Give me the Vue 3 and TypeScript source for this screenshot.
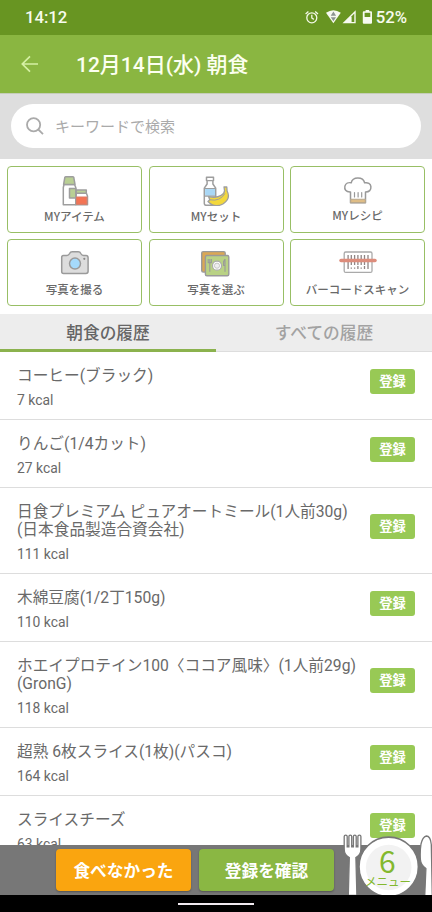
<script setup lang="ts">
import { ref } from 'vue'

interface Food {
  lines: string[]
  kcal: number
}

const foods: Food[] = [
  { lines: ['コーヒー(ブラック)'], kcal: 7 },
  { lines: ['りんご(1/4カット)'], kcal: 27 },
  { lines: ['日食プレミアム ピュアオートミール(1人前30g)', '(日本食品製造合資会社)'], kcal: 111 },
  { lines: ['木綿豆腐(1/2丁150g)'], kcal: 110 },
  { lines: ['ホエイプロテイン100〈ココア風味〉(1人前29g)', '(GronG)'], kcal: 118 },
  { lines: ['超熟 6枚スライス(1枚)(パスコ)'], kcal: 164 },
  { lines: ['スライスチーズ'], kcal: 63 },
]

const tabs = ['朝食の履歴', 'すべての履歴']
const activeTab = ref(0)
</script>

<template>
  <div class="screen">
    <div class="status">
      <span class="clock">14:12</span>
      <svg class="status-icons" width="68" height="20" viewBox="302 8 68 20">
        <g fill="none" stroke="#f4f9e8" stroke-width="1.3">
          <circle cx="310.8" cy="17.8" r="5" />
          <path d="M310.8 14.8V18l2 1.4M304.6 13.9l2.8-2.4M317 13.9l-2.8-2.4" />
        </g>
        <path fill="#f7faf0" d="M325 12.8Q332.3 7.7 339.8 12.8L332.4 23.2Z" />
        <path fill="#8c9490" d="M332.4 11.5l2.7 4.3h-5.4zM329.8 17.3h5.2l-2.6 4z" />
        <path fill="#f7faf0" d="M341.5 23.3L354.7 10.2V23.3Z" />
        <path fill="#689522" d="M350.6 16.2l2.7-2.6v8.3h-2.7z" />
        <path fill="#f7faf0" d="M364.6 10h3.6v1.3h1.8q1 0 1 1v10.4q0 1-1 1h-7.2q-1 0-1-1V12.300q0-1 1-1h1.800z" />
        <path fill="#689522" d="M363.600 12.800h5.700v4.200h-5.700z" />
      </svg>
      <span class="battery">52%</span>
    </div>

    <header class="appbar">
      <svg width="18" height="18" viewBox="0 0 18 18" fill="none" stroke="#d5f0a4" stroke-width="1.7">
        <path d="M9 1.300L1.300 9L9 16.700M1.500 9H17" />
      </svg>
      <h1>12月14日(水) 朝食</h1>
    </header>

    <div class="search">
      <div class="field">
        <svg width="18" height="18" viewBox="0 0 18 18" fill="none" stroke="#aaa" stroke-width="1.8">
          <circle cx="7.600" cy="7.700" r="6.600" />
          <path d="M12.300 12.500L17 17.200" />
        </svg>
        <span>キーワードで検索</span>
      </div>
    </div>

    <div class="shortcuts">
      <button class="tile">
        <svg width="38" height="32" viewBox="55 173.500 38 32" stroke="#9e9e9e" stroke-width="1.500" stroke-linejoin="round">
          <path fill="#fff" d="M63 184h10.500l1.300 3v17.300H62.300V187z" />
          <path fill="#b9cf94" d="M63.800 177.200q0-.9.900-.9h7.200q.9 0 .9.900l1.200 6.800H62.600z" />
          <path fill="#b9cf94" d="M68.500 188h6.300v9.500h-6.300z" />
          <path fill="#fff" d="M75.300 192.500h10l1.200 3v8.800H74.900z" />
          <path fill="#b9cf94" d="M75.300 189.600h10v3.200h-10z" />
          <path fill="#f47454" stroke="#dd7b64" stroke-width="1.200" d="M75.600 196.500h10.200v7.200H75.600z" />
        </svg>
        <span>MYアイテム</span>
      </button>
      <button class="tile">
        <svg width="38" height="32" viewBox="197 173.500 38 32" stroke="#9e9e9e" stroke-width="1.500" stroke-linejoin="round">
          <path fill="#fff" d="M206.500 176.700h7v3.400h-.6v3.400l2.800 4.200v15.200q0 1.900-1.900 1.900h-7.600q-1.900 0-1.900-1.900v-15.200l2.800-4.200v-3.400h-.6z" />
          <path stroke="none" fill="#a9d7f5" d="M205.100 188.300h9.900v7h-9.900z" />
          <path fill="none" stroke-width="1.200" d="M207.300 180.100h5.500M204.500 188h11M204.500 195.700h11" />
          <path fill="#f3d83c" stroke-width="1.300" d="M224 186.500h2.800l.3 4q4 7.500-3.800 12.800-9 4.800-15.300-2.300l1.800-1.800-1.200-3q7.900 1.600 12.600-1.300 3.500-2.200 3.300-5z" />
          <path fill="none" stroke-width="1" d="M210 199.300q10 1.900 15-6.300" />
        </svg>
        <span>MYセット</span>
      </button>
      <button class="tile raised">
        <svg width="38" height="32" viewBox="338.500 174.500 38 32" stroke="#999" stroke-width="1.500" stroke-linejoin="round" stroke-linecap="round">
          <path fill="#fff" d="M350 203.300v-10.800c-4.800.2-6.300-2.700-5.600-5.900.7-2.800 3.600-3.900 6.300-3.300 1.400-6.200 11.800-6.500 13.400 0 3.300-.7 6 .9 6.300 3.800.3 3.500-1.700 5.500-5.400 5.400v10.800z" />
          <path fill="#dfbd86" stroke="#b8a88f" stroke-width="1.100" d="M350.200 199.700h14.600v3.400h-14.600z" />
          <path fill="none" stroke-width="1.200" d="M354 193v4.500M357.600 193v4.500M361.200 193v4.500" />
        </svg>
        <span>MYレシピ</span>
      </button>
      <button class="tile">
        <svg width="38" height="32" viewBox="56 247 38 32" stroke="#9a9a9a" stroke-width="1.500" stroke-linejoin="round">
          <path fill="#ddd" d="M63.500 255.500h3.300q1.800-.2 2.800-2 .7-1.700 2.600-1.700h6q1.900 0 2.600 1.700 1 1.800 2.800 2h2.300q2.200 0 2.200 2.200v13.500q0 2.200-2.200 2.200H63.500q-1.800 0-1.800-2v-13.900q0-2 1.800-2z" />
          <circle cx="75" cy="263.600" r="5.500" fill="#a5dafc" />
          <circle cx="84.300" cy="258.800" r="1.100" fill="#888" stroke="none" />
        </svg>
        <span>写真を撮る</span>
      </button>
      <button class="tile">
        <svg width="38" height="32" viewBox="197 247 38 32" stroke="#9a9a9a" stroke-width="1.400" stroke-linejoin="round">
          <rect x="201.700" y="251.600" width="23.500" height="20.500" rx="1.500" fill="#dba753" />
          <rect x="205.400" y="255.500" width="23.400" height="20.300" rx="1.500" fill="#b9d284" />
          <circle cx="217" cy="265.700" r="4.500" fill="#fff" stroke="#aaa" stroke-width="1.200" />
          <circle cx="217" cy="265.700" r="2.600" fill="#eee" stroke="#bbb" stroke-width=".8" />
          <path fill="none" stroke-width="1.100" d="M209.800 262.500v9.300M208.200 259v3.600h3.200V259M209.800 259v3M225 259v12.800M225 259l-1.400 2.500v4h1.400" />
        </svg>
        <span>写真を選ぶ</span>
      </button>
      <button class="tile">
        <svg width="40" height="32" viewBox="337.500 247 40 32" fill="none" stroke="#aaa" stroke-width="1.300">
          <rect x="343.700" y="252" width="27.800" height="20.400" rx="1.500" fill="#fff" />
          <path stroke="#8f8585" stroke-width="1.300" d="M347.600 255v14M350.800 255v10M354.100 255v10M357.400 255v10M360.700 255v10M364 255v10M367.500 255v14M350.800 267.500v1.300M354.100 267.500v1.300M357.400 266v3M360.700 267.500v1.300M364 266v3" />
          <path stroke="#dd8d7c" stroke-width="3.500" stroke-linecap="round" d="M340.500 260.400h34" />
        </svg>
        <span>バーコードスキャン</span>
      </button>
    </div>

    <nav class="tabs">
      <button
        v-for="(tab, i) in tabs"
        :key="tab"
        class="tab"
        :class="{ active: i === activeTab }"
        @click="activeTab = i"
      >{{ tab }}</button>
    </nav>

    <ul class="list">
      <li v-for="food in foods" :key="food.lines[0]" class="row">
        <div class="info">
          <p v-for="line in food.lines" :key="line" class="name">{{ line }}</p>
          <p class="kcal">{{ food.kcal }} kcal</p>
        </div>
        <button class="add">登録</button>
      </li>
    </ul>

    <footer class="actions">
      <button class="action skip">食べなかった</button>
      <button class="action confirm">登録を確認</button>
      <svg class="plate" width="92" height="65" viewBox="340 830 92 65">
        <g fill="#fff" stroke="#777" stroke-width="1.300">
          <path d="M344.200 836.600q0-1.400 1.500-1.400t1.500 1.400v10.200h1.700v-10.200q0-1.400 1.400-1.400t1.400 1.400v10.200h1.700v-10.200q0-1.400 1.400-1.400t1.400 1.400v10.200h1.700v-10.200q0-1.400 1.500-1.400t1.500 1.400v12.400q0 6-5 8.500l1 38h-8.600l1-38q-5.100-2.500-5.100-8.500z" />
          <path d="M426.300 836q-3.800 1-5.300 8-1.200 8-.6 15.500.4 5.500 5.500 9l-1.200 28h7.600l-1-52q-.8-8.500-5-8.500z" />
          <circle cx="388.700" cy="866.800" r="29.700" stroke-width="1.600" />
        </g>
        <circle cx="388.700" cy="867.500" r="22.800" fill="#f2f2f2" />
        <text class="count" x="387.300" y="873">6</text>
        <text class="unit" x="388" y="886">メニュー</text>
      </svg>
    </footer>
    <div class="home"><i></i></div>
  </div>
</template>

<style>
body {
  margin: 0;
}
</style>

<style scoped>
.screen {
  width: 432px;
  height: 912px;
  display: flex;
  flex-direction: column;
  overflow: hidden;
  background: #fff;
  color: #696969;
  font-family: Roboto, "Noto Sans CJK JP", sans-serif;
}
button {
  border: 0;
  padding: 0;
  margin: 0;
  font-family: inherit;
  color: inherit;
  background: none;
}
.status {
  flex: 0 0 35px;
  display: flex;
  align-items: center;
  padding: 0 25px;
  background: #689522;
  color: #f7fbee;
  font-size: 16.700px;
  font-weight: 500;
  line-height: 34px;
}
.clock {
  padding-top: 1px;
}
.status-icons {
  margin-left: auto;
  overflow: visible;
}
.battery {
  margin-left: 5px;
  padding-top: 1px;
}
.appbar {
  flex: 0 0 59px;
  box-sizing: border-box;
  display: flex;
  align-items: center;
  padding-left: 21px;
  background: #8ab641;
  border-bottom: 1px solid #c5cdb9;
}
.appbar h1 {
  margin: 0 0 0 37px;
  padding-top: 1px;
  color: #fcfff0;
  font-size: 21px;
  font-weight: 500;
  line-height: 30px;
}
.search {
  flex: 0 0 65px;
  box-sizing: border-box;
  padding: 10px 11px 11px;
  background: #dedede;
}
.field {
  display: flex;
  align-items: center;
  gap: 11px;
  height: 44px;
  padding-left: 15px;
  border-radius: 22px;
  background: #fff;
  color: #aaa;
  font-size: 15px;
}
.field span {
  padding-bottom: 2px;
}
.shortcuts {
  flex: 0 0 155px;
  box-sizing: border-box;
  display: grid;
  grid-template-columns: repeat(3, 1fr);
  grid-template-rows: 67px 67px;
  gap: 6.500px;
  padding: 6.500px 7px 0;
}
.tile {
  display: flex;
  flex-direction: column;
  align-items: center;
  justify-content: flex-start;
  box-sizing: border-box;
  padding-top: 7px;
  border: 1.500px solid #98bf65;
  border-radius: 4px;
  background: #fff;
  font-family: "Noto Sans CJK JP", sans-serif;
  font-size: 11.500px;
  font-weight: 500;
  line-height: 16px;
}
.tile span {
  margin-top: 2px;
}
.tile.raised span {
  margin-top: 1px;
}
.tabs {
  flex: 0 0 38px;
  display: flex;
  background: #ededed;
}
.tab {
  flex: 1;
  box-sizing: border-box;
  border-bottom: 1px solid #ddd;
  padding-top: 3px;
  color: #a2a2a2;
  font-size: 16.700px;
  font-weight: 500;
  line-height: 30px;
}
.tab.active {
  border-bottom: 3px solid #8bb24e;
  padding-top: 5px;
  color: #666;
}
.list {
  flex: 1 1 0;
  min-height: 0;
  overflow: hidden;
  margin: 0;
  padding: 0;
  list-style: none;
}
.row {
  display: flex;
  align-items: center;
  justify-content: space-between;
  box-sizing: border-box;
  padding: 15px 17px 10px;
  border-bottom: 1px solid #ddd;
}
.name,
.kcal {
  margin: 0;
  white-space: nowrap;
}
.name {
  font-size: 15.680px;
  line-height: 18px;
  height: 18px;
}
.kcal {
  margin-top: 6px;
  font-size: 13.900px;
  line-height: 18px;
}
.add {
  width: 45px;
  height: 25px;
  margin-bottom: 14px;
  border-radius: 3px;
  background: #98c955;
  color: #fff;
  font-size: 13.300px;
  font-weight: 700;
  line-height: 25px;
}
.actions {
  position: relative;
  flex: 0 0 50px;
  box-sizing: border-box;
  display: flex;
  gap: 8px;
  padding: 4px 0 4px 56px;
  background: #777;
}
.action {
  width: 135px;
  height: 42px;
  border-radius: 4px;
  color: #fff;
  font-size: 16.700px;
  font-weight: 700;
  box-shadow: 0 1px 2px rgba(0, 0, 0, 0.3);
}
.skip {
  background: #faa50f;
}
.confirm {
  background: #8ab743;
}
.plate {
  position: absolute;
  right: 0;
  bottom: 0;
}
.count,
.unit {
  fill: #83b82e;
  font-family: "Noto Sans CJK JP", sans-serif;
  text-anchor: middle;
}
.count {
  font-size: 30px;
}
.unit {
  font-size: 11.500px;
}
.home {
  flex: 0 0 17px;
  display: flex;
  justify-content: center;
  background: #000;
}
.home i {
  width: 76px;
  height: 2px;
  margin-top: 8px;
  background: #f0eaf0;
}
</style>
